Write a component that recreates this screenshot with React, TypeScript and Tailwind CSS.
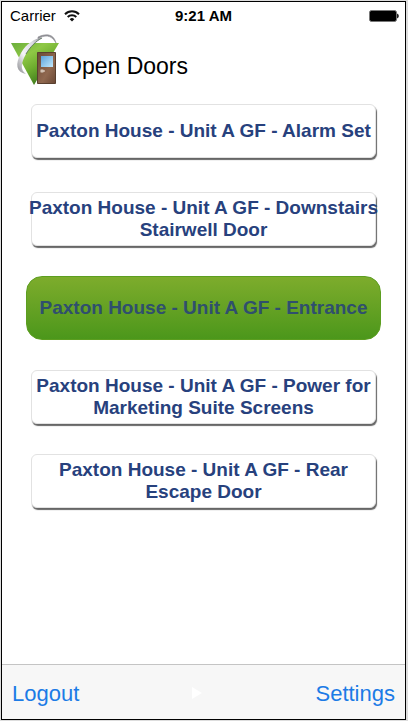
import React from 'react';

interface Door {
	id: number;
	name: string;
	open?: boolean;
}

const doors: Door[] = [
	{ id: 1, name: 'Paxton House - Unit A GF - Alarm Set' },
	{ id: 2, name: 'Paxton House - Unit A GF - Downstairs Stairwell Door' },
	{ id: 3, name: 'Paxton House - Unit A GF - Entrance', open: true },
	{ id: 4, name: 'Paxton House - Unit A GF - Power for Marketing Suite Screens' },
	{ id: 5, name: 'Paxton House - Unit A GF - Rear Escape Door' },
];

function WifiIcon() {
	return (
		<svg width="16" height="12" viewBox="0 0 16 12" fill="none" stroke="#111" strokeWidth="2">
			<path d="M1 4.2a10 10 0 0 1 14 0" />
			<path d="M3.7 7a6.1 6.1 0 0 1 8.6 0" />
			<path d="M8 11.6 5.7 9.2a3.3 3.3 0 0 1 4.6 0z" fill="#111" stroke="none" />
		</svg>
	);
}

function BatteryIcon() {
	return (
		<svg width="30" height="12" viewBox="0 0 30 12">
			<rect x="0.5" y="0.5" width="27" height="11" rx="2" fill="#000" stroke="#777" />
			<path d="M28 3.5v5a2.6 2.6 0 0 0 0-5z" fill="#222" />
		</svg>
	);
}

function Logo() {
	return (
		<svg width="50" height="54" viewBox="0 0 50 54">
			<defs>
				<linearGradient id="leaf" x1="0" y1="0" x2="0.7" y2="1">
					<stop offset="0" stopColor="#6aae3c" />
					<stop offset="0.35" stopColor="#8fc846" />
					<stop offset="0.6" stopColor="#6fae2f" />
					<stop offset="1" stopColor="#34701a" />
				</linearGradient>
				<linearGradient id="ring" x1="0" y1="1" x2="1" y2="0">
					<stop offset="0" stopColor="#8a8a8e" />
					<stop offset="0.4" stopColor="#f4f4f8" />
					<stop offset="0.75" stopColor="#dcdce2" />
					<stop offset="1" stopColor="#8c8c92" />
				</linearGradient>
				<linearGradient id="wood" x1="0" y1="0" x2="1" y2="1">
					<stop offset="0" stopColor="#6b4a37" />
					<stop offset="0.6" stopColor="#90684f" />
					<stop offset="1" stopColor="#6a4835" />
				</linearGradient>
				<linearGradient id="glass" x1="0" y1="0" x2="1" y2="1">
					<stop offset="0" stopColor="#5ba3dc" />
					<stop offset="1" stopColor="#c2e8fb" />
				</linearGradient>
			</defs>
			<path d="M1 11h48L24 53z" fill="url(#leaf)" />
			<path d="M28 7C34 3 41 2 46 11 44 2 36 1 28 5z" fill="#8e8e94" stroke="#8e8e94" strokeWidth="0.6" />
			<path d="M32 6C25 6 16 12 11 21 5 32 6 40 16 42 10 38 11 31 16 22 20 15 26 9 32 6z" fill="url(#ring)" />
			<path d="M32 6C26 9 20 15 16 22" fill="none" stroke="#4d6650" strokeWidth="0.8" />
			<path d="M27.5 20.5h18v31h-18z" fill="url(#wood)" stroke="#59402f" />
			<path d="M31 24h12v11H31z" fill="url(#glass)" />
			<circle cx="32" cy="39" r="2" fill="#b59f8d" />
			<path d="M31 39h4" stroke="#f0e4d8" />
		</svg>
	);
}

function DoorButton({ name, open }: Door) {
	if (open) {
		return (
			<button className="min-h-16 -mx-[5px] rounded-2xl border border-[#5c9e20] bg-linear-to-b from-[#7dac2c] to-[#4b971b] text-[#2f4f6e]">
				{name}
			</button>
		);
	}

	return (
		<button className="min-h-[54px] rounded-md border border-[#e2e2e2] bg-white text-[#27417d] shadow-[1px_2px_1px_#666] first:mb-1">
			<span className="block -mx-1.5">{name}</span>
		</button>
	);
}

function App() {
	return (
		<div className="flex min-h-screen bg-[#ddd] p-px pr-0.5 font-['Liberation_Sans',Arial,sans-serif]">
			<div className="flex flex-1 flex-col border border-black bg-white text-black">
				<div className="grid grid-cols-3 items-center px-1.5 pt-1 text-[15px] leading-5">
					<div className="flex items-center gap-2 pl-0.5">
						<span>Carrier</span>
						<WifiIcon />
					</div>
					<span className="text-center font-bold">9:21 AM</span>
					<div className="flex justify-end">
						<BatteryIcon />
					</div>
				</div>

				<header className="flex items-center gap-1 px-2 pt-1.5">
					<Logo />
					<h1 className="pt-3.5 text-[23px] leading-7">Open Doors</h1>
				</header>

				<main className="flex flex-1 flex-col gap-[30px] px-[29px] pt-[18px] pb-8 text-[19px] leading-[22px] font-bold">
					{doors.map((door) => (
						<DoorButton key={door.id} {...door} />
					))}
				</main>

				<footer className="flex h-[55px] items-center justify-between border-t border-[#c4c4c4] bg-[#f7f7f7] px-2.5 pt-0.5 text-[22px] text-[#1c7be6]">
					<button>Logout</button>
					<svg width="10" height="12" viewBox="0 0 10 12">
						<path d="M0 0l10 6-10 6z" fill="#fff" />
					</svg>
					<button>Settings</button>
				</footer>
			</div>
		</div>
	);
}

export default App;
